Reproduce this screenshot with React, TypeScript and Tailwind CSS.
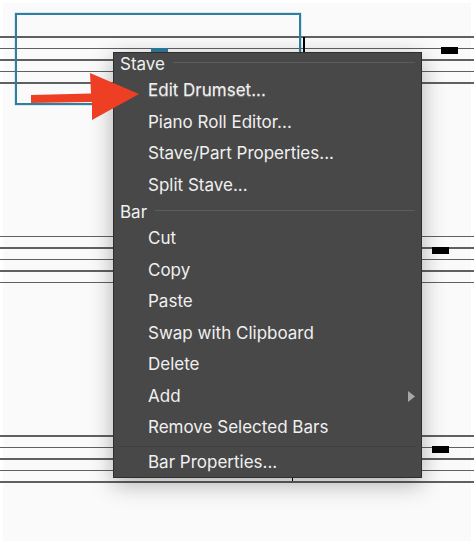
const font = { fontFamily: "Inter, 'Liberation Sans', sans-serif" };

function Staff({ rest, className }: { rest: string; className: string }) {
    return (
        <div className={`relative -mx-[3px] flex flex-col gap-[10px] ${className}`}>
            {[0, 1, 2, 3, 4].map((line) => (
                <div key={line} className="h-[1.5px] bg-[#606060]" />
            ))}
            <div className={`absolute top-[11px] h-[7px] w-[17px] bg-black ${rest}`} />
        </div>
    );
}

function SectionLabel({ label, height }: { label: string; height: string }) {
    return (
        <div className={`flex items-start gap-2 px-[6px] text-[17px] leading-[20px] text-[#f0f0f0] ${height}`}>
            <span>{label}</span>
            <div className="mt-[8px] h-px flex-1 bg-[#5c5c5c]" />
        </div>
    );
}

function Item({ label, submenu, blurred }: { label: string; submenu?: boolean; blurred?: boolean }) {
    return (
        <div className="flex h-[31.5px] items-center justify-between pl-[34px] pr-[6px]">
            <span className={`text-[17px] text-[#f0f0f0] ${blurred ? "[text-shadow:0_1px_1px_#8a8a8a]" : ""}`}>{label}</span>
            {submenu && (
                <svg width="7" height="11" viewBox="0 0 7 11">
                    <path d="M0 0 L7 5.5 L0 11 Z" fill="#a8a8a8" />
                </svg>
            )}
        </div>
    );
}

export default function App() {
    return (
        <div className="relative h-[544px] w-[474px] overflow-hidden bg-white p-[3px]" style={font}>
            <div className="h-[538px] bg-[#fafafa] pt-[33px]">
                <Staff rest="left-[441px]" className="mb-[152px]" />
                <Staff rest="left-[432px]" className="mb-[152px]" />
                <Staff rest="left-[432px]" className="" />
            </div>

            {/* selection box and marks under the menu */}
            <div className="absolute left-[15px] top-[13px] h-[92px] w-[286px] border-[2px] border-[#2f7fa3] shadow-[0_0_1px_#3a87a8]" />
            <div className="absolute left-[151px] top-[48px] h-[5px] w-[17px] bg-[#2f7da0]" />
            <div className="absolute left-[303px] top-[37px] h-[15px] w-[2px] bg-black" />
            <div className="absolute left-[292px] top-[478px] h-[3px] w-px bg-black" />

            <div className="absolute left-[113px] top-[52px] h-[426px] w-[309px] border border-[#2e2e2e] bg-[#484848] pt-[1px] shadow-[0_6px_22px_rgba(0,0,0,0.3)]">
                <SectionLabel label="Stave" height="h-[21px]" />
                <Item label="Edit Drumset..." blurred />
                <Item label="Piano Roll Editor..." />
                <Item label="Stave/Part Properties..." />
                <Item label="Split Stave..." />
                <div className="pt-[1px]">
                    <SectionLabel label="Bar" height="h-[21px]" />
                </div>
                <Item label="Cut" />
                <Item label="Copy" />
                <Item label="Paste" />
                <Item label="Swap with Clipboard" />
                <Item label="Delete" />
                <Item label="Add" submenu />
                <Item label="Remove Selected Bars" />
                <div className="mx-[5px] mt-[2px] h-px bg-[#404040]" />
                <Item label="Bar Properties..." />
            </div>

            <svg className="absolute left-0 top-0" width="474" height="544" viewBox="0 0 474 544">
                <path d="M31 95 L91 93.5 L90 73 L139 94 L92 120 L92 102 L31 103 Z" fill="#ee3f24" />
            </svg>
        </div>
    );
}
